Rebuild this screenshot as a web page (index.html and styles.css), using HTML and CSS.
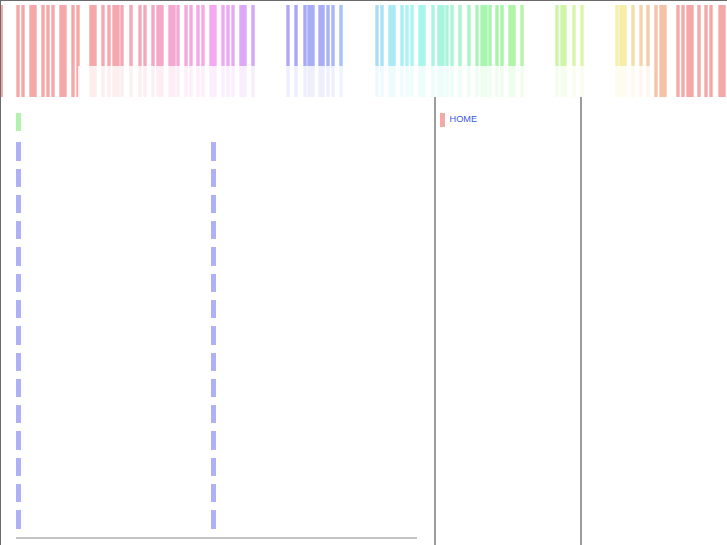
FILE: index.html
```html
<!DOCTYPE html>
<html>
<head>
<meta charset="utf-8">
<title>Home</title>
<link rel="stylesheet" href="styles.css">
</head>
<body>
<div class="page">
  <header class="header">
    <div class="bars">
      <i class="bar e" style="--m:0px;--h:0"></i>
      <i class="bar t" style="--m:13.5px;--h:0"></i>
      <i class="bar t" style="--m:1px;--h:0"></i>
      <i class="bar w" style="--m:4px;--h:0"></i>
      <i class="bar t" style="--m:4.5px;--h:0"></i>
      <i class="bar t" style="--m:1px;--h:0"></i>
      <i class="bar t" style="--m:1px;--h:0"></i>
      <i class="bar w" style="--m:4px;--h:0"></i>
      <i class="bar t" style="--m:4.5px;--h:0"></i>
      <i class="bar t" style="--m:1px;--h:0"></i>
      <i class="bar w" style="--m:9px;--h:358"></i>
      <i class="bar t" style="--m:4.5px;--h:354"></i>
      <i class="bar t" style="--m:2px;--h:354"></i>
      <i class="bar w" style="--m:1px;--h:354"></i>
      <i class="bar t" style="--m:0.5px;--h:352"></i>
      <i class="bar t" style="--m:5px;--h:348"></i>
      <i class="bar t" style="--m:5px;--h:346"></i>
      <i class="bar t" style="--m:1px;--h:345"></i>
      <i class="bar t" style="--m:4px;--h:340"></i>
      <i class="bar w" style="--m:1px;--h:337"></i>
      <i class="bar w" style="--m:4.5px;--h:327"></i>
      <i class="bar t" style="--m:0.5px;--h:324"></i>
      <i class="bar t" style="--m:4px;--h:318"></i>
      <i class="bar t" style="--m:1px;--h:316"></i>
      <i class="bar t" style="--m:3px;--h:314"></i>
      <i class="bar t" style="--m:1px;--h:312"></i>
      <i class="bar w" style="--m:4px;--h:305"></i>
      <i class="bar t" style="--m:4.5px;--h:296"></i>
      <i class="bar t" style="--m:1px;--h:293"></i>
      <i class="bar t" style="--m:1px;--h:290"></i>
      <i class="bar w" style="--m:4px;--h:281"></i>
      <i class="bar t" style="--m:4.5px;--h:275"></i>
      <i class="bar t" style="--m:30.5px;--h:246"></i>
      <i class="bar t" style="--m:4.5px;--h:240"></i>
      <i class="bar t" style="--m:5px;--h:238"></i>
      <i class="bar w" style="--m:0px;--h:236"></i>
      <i class="bar w" style="--m:3px;--h:236"></i>
      <i class="bar t" style="--m:1px;--h:232"></i>
      <i class="bar t" style="--m:1px;--h:228"></i>
      <i class="bar t" style="--m:4px;--h:220"></i>
      <i class="bar t" style="--m:32px;--h:198"></i>
      <i class="bar t" style="--m:1px;--h:194"></i>
      <i class="bar w" style="--m:4px;--h:188"></i>
      <i class="bar t" style="--m:4.5px;--h:184"></i>
      <i class="bar t" style="--m:1px;--h:182"></i>
      <i class="bar t" style="--m:1px;--h:180"></i>
      <i class="bar w" style="--m:4px;--h:172"></i>
      <i class="bar t" style="--m:5px;--h:166"></i>
      <i class="bar w" style="--m:2.5px;--h:163"></i>
      <i class="bar t" style="--m:0.5px;--h:160"></i>
      <i class="bar t" style="--m:1px;--h:158"></i>
      <i class="bar t" style="--m:4px;--h:150"></i>
      <i class="bar t" style="--m:4.5px;--h:142"></i>
      <i class="bar t" style="--m:4.5px;--h:132"></i>
      <i class="bar w" style="--m:1px;--h:128"></i>
      <i class="bar t" style="--m:0.5px;--h:125"></i>
      <i class="bar t" style="--m:3px;--h:122"></i>
      <i class="bar t" style="--m:1px;--h:120"></i>
      <i class="bar w" style="--m:4px;--h:115"></i>
      <i class="bar t" style="--m:4px;--h:110"></i>
      <i class="bar t" style="--m:31.5px;--h:92"></i>
      <i class="bar w" style="--m:0.5px;--h:90"></i>
      <i class="bar t" style="--m:4.5px;--h:82"></i>
      <i class="bar t" style="--m:4px;--h:78"></i>
      <i class="bar t" style="--m:31px;--h:57"></i>
      <i class="bar w" style="--m:0.5px;--h:54"></i>
      <i class="bar t" style="--m:4px;--h:43"></i>
      <i class="bar t" style="--m:4.5px;--h:35"></i>
      <i class="bar t" style="--m:3px;--h:28"></i>
      <i class="bar t" style="--m:4px;--h:22"></i>
      <i class="bar w" style="--m:1px;--h:20"></i>
      <i class="bar t" style="--m:9.5px;--h:2"></i>
      <i class="bar t" style="--m:1px;--h:0"></i>
      <i class="bar w" style="--m:1px;--h:0"></i>
      <i class="bar t" style="--m:3.5px;--h:0"></i>
      <i class="bar t" style="--m:3px;--h:0"></i>
      <i class="bar t" style="--m:1px;--h:0"></i>
      <i class="bar w" style="--m:5px;--h:0"></i>
    </div>
    <div class="veil"></div>
  </header>
  <div class="main">
    <section class="content">
      <div class="marker green"></div>
      <ul class="list">
        <li></li><li></li>
        <li></li><li></li>
        <li></li><li></li>
        <li></li><li></li>
        <li></li><li></li>
        <li></li><li></li>
        <li></li><li></li>
        <li></li><li></li>
        <li></li><li></li>
        <li></li><li></li>
        <li></li><li></li>
        <li></li><li></li>
        <li></li><li></li>
        <li></li><li></li>
        <li></li><li></li>
      </ul>
      <div class="rule"></div>
    </section>
    <nav class="sidebar">
      <a class="nav-item" href="#"><span class="marker pink"></span><span class="nav-label">HOME</span></a>
    </nav>
    <div class="rest"></div>
  </div>
</div>
</body>
</html>
```

FILE: styles.css
```css
html, body {
  margin: 0;
  padding: 0;
  overflow: hidden;
  background: #ffffff;
  font-family: "Liberation Sans", Arial, sans-serif;
}

.page {
  height: 100vh;
  box-sizing: border-box;
  border-top: 1px solid #6a6a6a;
  border-left: 1px solid #6a6a6a;
  display: flex;
  flex-direction: column;
}

.header {
  position: relative;
  height: 96px;
  flex: none;
  overflow: hidden;
}

.bars {
  display: flex;
  align-items: flex-start;
  padding-top: 4px;
}

.bar {
  display: block;
  flex: none;
  height: 92px;
  margin-left: var(--m, 1px);
  background: hsl(var(--h) 80% 81%);
  box-shadow: inset 1px 0 0 rgba(255, 255, 255, 0.3), inset -1px 0 0 rgba(255, 255, 255, 0.3);
}

.bar.t { width: 4px; }
.bar.w { width: 7.5px; }
.bar.e { width: 1.5px; box-shadow: none; }

.veil {
  position: absolute;
  left: 77px;
  width: 575px;
  top: 65px;
  bottom: 0;
  background: rgba(255, 255, 255, 0.8);
}

.main {
  flex: 1;
  display: flex;
  min-height: 0;
}

.content {
  width: 433px;
  flex: none;
  border-right: 2px solid #9c9c9c;
  padding: 16px 0 0 15px;
  box-sizing: content-box;
  width: 418px;
}

.marker {
  display: block;
  width: 5px;
}

.marker.green {
  height: 18px;
  background: #b3f2ae;
}

.list {
  list-style: none;
  margin: 11.3px 0 0 0;
  padding: 0;
  display: grid;
  grid-template-columns: 195px 195px;
  grid-auto-rows: 26.29px;
}

.list li {
  width: 5px;
  height: 18.3px;
  background: #afb1f6;
}

.rule {
  width: 401px;
  border-top: 2px solid #c4c4c4;
  margin-top: 0;
}

.sidebar {
  width: 144px;
  flex: none;
  border-right: 2px solid #9c9c9c;
  padding: 16px 0 0 4px;
  box-sizing: content-box;
  width: 140px;
}

.nav-item {
  display: flex;
  align-items: flex-start;
  gap: 5px;
  text-decoration: none;
}

.marker.pink {
  width: 4.5px;
  height: 14px;
  background: #f4a9a9;
}

.nav-label {
  font-size: 9.2px;
  line-height: 12px;
  color: #3a5bdc;
}

.rest {
  flex: 1;
}
```
